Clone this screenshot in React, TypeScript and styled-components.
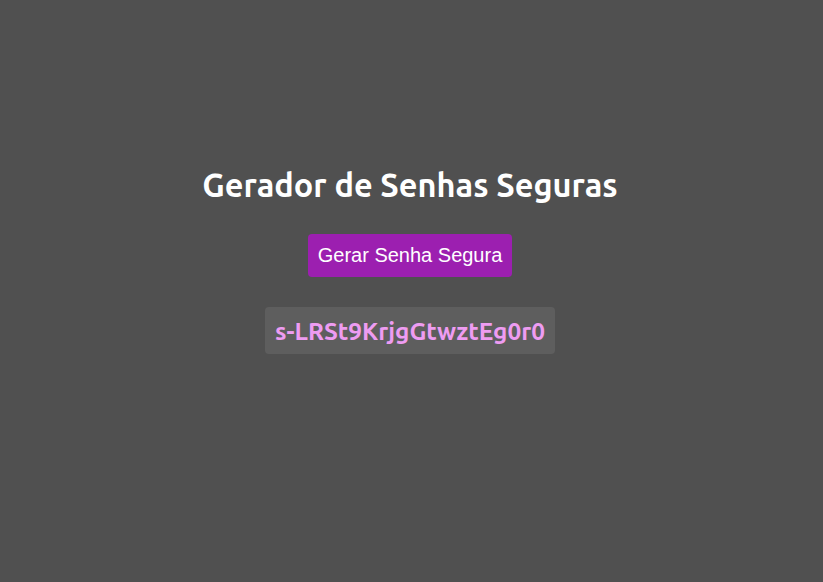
import { useState } from "react";
import styled, { createGlobalStyle } from "styled-components";

const GlobalStyle = createGlobalStyle`
  html, body {
    margin: 0;
    padding: 0;
    background-color: #505050;
  }
`;

const Page = styled.main`
  min-height: 100vh;
  box-sizing: border-box;
  display: flex;
  flex-direction: column;
  align-items: center;
  padding-top: 165px;
  padding-right: 3px;
  font-family: "Ubuntu", "Open Sans", sans-serif;
`;

const Title = styled.h1`
  margin: 0 0 29px;
  font-size: 32.5px;
  font-weight: 700;
  color: #ffffff;
  line-height: 40px;
`;

const GenerateButton = styled.button`
  height: 43px;
  padding: 0 10px;
  border: none;
  border-radius: 4px;
  background-color: #9c1fb0;
  color: #ffffff;
  font-family: "Liberation Sans", Arial, sans-serif;
  font-size: 20px;
  cursor: pointer;
`;

const PasswordBox = styled.div`
  margin-top: 30px;
  height: 47px;
  box-sizing: border-box;
  padding: 0 10px;
  display: flex;
  align-items: center;
  border-radius: 4px;
  background-color: #5e5e5e;
  color: #ee9cf2;
  font-size: 24.4px;
  font-weight: 700;
`;

const generate = () => {
  const chars =
    "ABCDEFGHIJKLMNOPQRSTUVWXYZabcdefghijklmnopqrstuvwxyz0123456789-_";
  let out = "";
  for (let i = 0; i < 20; i++) {
    out += chars[Math.floor(Math.random() * chars.length)];
  }
  return out;
};

export default function App() {
  const [password, setPassword] = useState("s-LRSt9KrjgGtwztEg0r0");

  return (
    <>
      <GlobalStyle />
      <Page>
        <Title>Gerador de Senhas Seguras</Title>
        <GenerateButton onClick={() => setPassword(generate())}>
          Gerar Senha Segura
        </GenerateButton>
        <PasswordBox>{password}</PasswordBox>
      </Page>
    </>
  );
}
